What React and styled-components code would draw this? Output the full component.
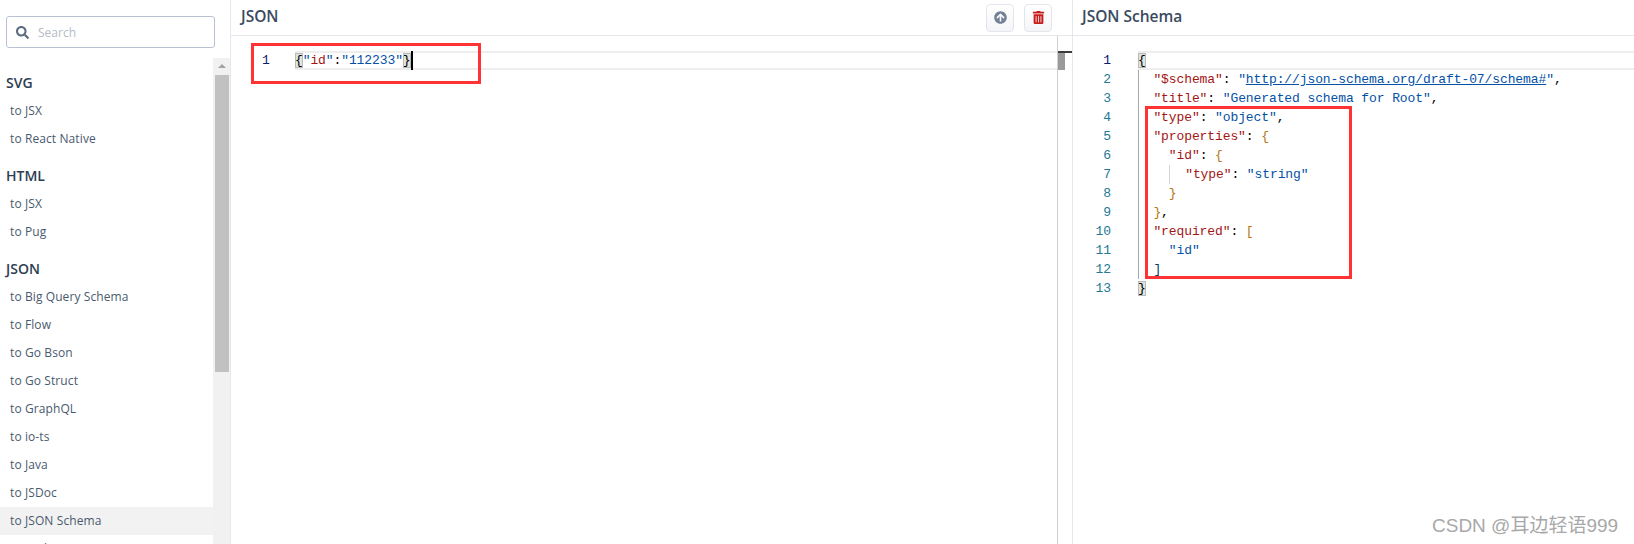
import React from 'react'
import styled, { createGlobalStyle } from 'styled-components'
import { FaArrowCircleUp, FaTrashAlt, FaSearch } from 'react-icons/fa'

const GlobalStyle = createGlobalStyle`
  html, body {
    margin: 0;
    height: 544px;
    overflow: hidden;
    background: #fff;
    font-family: "Open Sans", "Noto Sans", sans-serif;
  }
`

const groups = [
  { title: 'SVG', items: ['to JSX', 'to React Native'] },
  { title: 'HTML', items: ['to JSX', 'to Pug'] },
  {
    title: 'JSON',
    items: ['to Big Query Schema', 'to Flow', 'to Go Bson', 'to Go Struct', 'to GraphQL', 'to io-ts', 'to Java', 'to JSDoc', 'to JSON Schema', 'to Kotlin'],
  },
]

const schemaLines = [
  [['b', '{']],
  [['s', '  '], ['k', '"$schema"'], ['p', ': '], ['v', '"'], ['l', 'http://json-schema.org/draft-07/schema#'], ['v', '"'], ['p', ',']],
  [['s', '  '], ['k', '"title"'], ['p', ': '], ['v', '"Generated schema for Root"'], ['p', ',']],
  [['s', '  '], ['k', '"type"'], ['p', ': '], ['v', '"object"'], ['p', ',']],
  [['s', '  '], ['k', '"properties"'], ['p', ': '], ['o', '{']],
  [['s', '    '], ['k', '"id"'], ['p', ': '], ['o', '{']],
  [['s', '    '], ['g', ''], ['s', '  '], ['k', '"type"'], ['p', ': '], ['v', '"string"']],
  [['s', '    '], ['o', '}']],
  [['s', '  '], ['o', '}'], ['p', ',']],
  [['s', '  '], ['k', '"required"'], ['p', ': '], ['o', '[']],
  [['s', '    '], ['v', '"id"']],
  [['s', '  '], ['d', ']']],
  [['b', '}']],
]

function renderToken([type, text], key) {
  switch (type) {
    case 'k': return <Key key={key}>{text}</Key>
    case 'v': return <Str key={key}>{text}</Str>
    case 'l': return <UrlLink key={key}>{text}</UrlLink>
    case 'o': return <Bracket key={key}>{text}</Bracket>
    case 'd': return <DarkBracket key={key}>{text}</DarkBracket>
    case 'b': return <MatchBracket key={key}>{text}</MatchBracket>
    case 'g': return <IndentGuide key={key} />
    default: return <span key={key}>{text}</span>
  }
}

export default function App() {
  return (
    <Page>
      <GlobalStyle />
      <Sidebar>
        <SearchWrap>
          <SearchBox>
            <FaSearch size={13} color="#5a6b80" />
            <SearchText>Search</SearchText>
          </SearchBox>
        </SearchWrap>
        <NavArea>
          <NavList>
            {groups.map((g) => (
              <NavGroup key={g.title}>
                <GroupTitle>{g.title}</GroupTitle>
                {g.items.map((it) => (
                  <NavItem key={it} $active={it === 'to JSON Schema'}>{it}</NavItem>
                ))}
              </NavGroup>
            ))}
          </NavList>
          <ScrollTrack>
            <ScrollArrow />
            <ScrollThumb />
          </ScrollTrack>
        </NavArea>
      </Sidebar>

      <Panel $wide>
        <PanelHeader $inset={10}>
          <PanelTitle>JSON</PanelTitle>
          <Actions>
            <IconButton><FaArrowCircleUp size={13} color="#718096" /></IconButton>
            <IconButton><FaTrashAlt size={13} color="#c81e1e" /></IconButton>
          </Actions>
        </PanelHeader>
        <EditorRow>
          <Editor>
            <CodeLine>
              <LeftGutter>1</LeftGutter>
              <ActiveCode>
                <MatchBracket>{'{'}</MatchBracket>
                <Str>"</Str><Key>id</Key><Str>"</Str>:<Str>"112233"</Str>
                <MatchBracket>{'}'}</MatchBracket>
                <Cursor />
              </ActiveCode>
            </CodeLine>
            <LeftMark />
          </Editor>
          <Overview>
            <OverviewCap />
            <OverviewThumb />
          </Overview>
        </EditorRow>
      </Panel>

      <Panel>
        <PanelHeader $inset={9}>
          <PanelTitle>JSON Schema</PanelTitle>
        </PanelHeader>
        <SchemaEditor>
          {schemaLines.map((tokens, i) => {
            const first = i === 0
            const last = i === schemaLines.length - 1
            return (
              <CodeLine key={i}>
                <RightGutter $current={first}>{i + 1}</RightGutter>
                {first ? (
                  <ActiveCode>{tokens.map(renderToken)}</ActiveCode>
                ) : (
                  <GuidedCode $guide={!last}>{tokens.map(renderToken)}</GuidedCode>
                )}
              </CodeLine>
            )
          })}
          <RightMark />
        </SchemaEditor>
      </Panel>

      <Watermark>CSDN @耳边轻语999</Watermark>
    </Page>
  )
}

const Page = styled.div`
  display: flex;
  height: 544px;
  overflow: hidden;
  position: relative;
`

const Sidebar = styled.aside`
  width: 230px;
  flex: none;
  display: flex;
  flex-direction: column;
  border-right: 1px solid #e4e7ec;
  background: #fff;
`

const SearchWrap = styled.div`
  height: 58px;
  flex: none;
  padding: 16px 15px 0 6px;
  box-sizing: border-box;
`

const SearchBox = styled.div`
  height: 32px;
  box-sizing: border-box;
  border: 1px solid #b9c2d0;
  border-radius: 3px;
  display: flex;
  align-items: center;
  padding-left: 9px;
  gap: 9px;
`

const SearchText = styled.span`
  font-size: 12px;
  color: #b4bcc6;
`

const NavArea = styled.div`
  flex: 1;
  display: flex;
  min-height: 0;
`

const NavList = styled.nav`
  flex: 1;
  overflow: hidden;
  padding-top: 14px;
`

const NavGroup = styled.div`
  margin-bottom: 12px;
`

const GroupTitle = styled.div`
  height: 25px;
  line-height: 22px;
  padding-left: 6px;
  font-size: 14px;
  font-weight: 600;
  color: #2d3d52;
`

const NavItem = styled.div`
  height: 28px;
  line-height: 28px;
  padding-left: 10px;
  font-size: 12px;
  letter-spacing: 0.1px;
  color: #4a5a6e;
  background: ${(p) => (p.$active ? '#f2f2f2' : 'transparent')};
`

const ScrollTrack = styled.div`
  width: 17px;
  flex: none;
  background: #f1f1f1;
  display: flex;
  flex-direction: column;
  align-items: center;
`

const ScrollArrow = styled.div`
  margin: 6px 0 7px;
  width: 0;
  height: 0;
  border-left: 4px solid transparent;
  border-right: 4px solid transparent;
  border-bottom: 4px solid #a3a3a3;
`

const ScrollThumb = styled.div`
  width: 14px;
  height: 297px;
  background: #c1c1c1;
`

const Panel = styled.section`
  ${(p) => (p.$wide ? 'width: 841px; flex: none; border-right: 1px solid #e4e7ec;' : 'flex: 1;')}
  display: flex;
  flex-direction: column;
  min-width: 0;
  position: relative;
`

const PanelHeader = styled.header`
  height: 36px;
  flex: none;
  box-sizing: border-box;
  border-bottom: 1px solid #e4e7ec;
  display: flex;
  align-items: center;
  justify-content: space-between;
  padding: 0 20px 3px ${(p) => p.$inset}px;
`

const PanelTitle = styled.h2`
  margin: 0;
  font-size: 15.5px;
  font-weight: 600;
  color: #3a4a60;
`

const Actions = styled.div`
  display: flex;
  gap: 10px;
  margin-top: 3px;
`

const IconButton = styled.button`
  width: 28px;
  height: 28px;
  padding: 0;
  display: flex;
  align-items: center;
  justify-content: center;
  border: 1px solid #e2e6ec;
  border-radius: 4px;
  background: linear-gradient(#fff, #f4f5f7);
`

const EditorRow = styled.div`
  flex: 1;
  display: flex;
  min-height: 0;
`

const Editor = styled.div`
  flex: 1;
  padding-top: 15px;
  border-right: 1px solid #cfcfcf;
`

const SchemaEditor = styled.div`
  flex: 1;
  padding-top: 15px;
`

const CodeLine = styled.div`
  display: flex;
  height: 19px;
  line-height: 19px;
  font-family: "Liberation Mono", "DejaVu Sans Mono", monospace;
  font-size: 13px;
  letter-spacing: -0.1px;
  white-space: pre;
  color: #000;
`

const LeftGutter = styled.div`
  width: 64px;
  flex: none;
  padding-left: 31px;
  box-sizing: border-box;
  color: #0b216f;
`

const RightGutter = styled.div`
  width: 38px;
  margin-right: 27px;
  flex: none;
  text-align: right;
  color: ${(p) => (p.$current ? '#0b216f' : '#237893')};
`

const ActiveCode = styled.div`
  flex: 1;
  box-sizing: border-box;
  border-top: 2px solid #eeeeee;
  border-bottom: 2px solid #eeeeee;
  line-height: 15px;
`

const GuidedCode = styled.div`
  flex: 1;
  box-shadow: ${(p) => (p.$guide ? 'inset 1px 0 0 #a8a8a8' : 'none')};
`

const Key = styled.span`
  color: #a31515;
`

const Str = styled.span`
  color: #0451a5;
`

const UrlLink = styled.span`
  color: #0451a5;
  text-decoration: underline;
`

const Bracket = styled.span`
  color: #b5750f;
`

const DarkBracket = styled.span`
  color: #0b3a66;
`

const MatchBracket = styled.span`
  background: #dfe5dc;
  outline: 1px solid #b9b9b9;
  outline-offset: -1px;
`

const Cursor = styled.span`
  display: inline-block;
  width: 2px;
  height: 19px;
  margin-top: -2px;
  vertical-align: top;
  background: #000;
`

const IndentGuide = styled.span`
  display: inline-block;
  width: 0;
  height: 19px;
  vertical-align: top;
  border-left: 1px solid #d3d3d3;
`

const Overview = styled.div`
  width: 14px;
  flex: none;
  padding-top: 15px;
`

const OverviewCap = styled.div`
  height: 2px;
  background: #3c3c3c;
`

const OverviewThumb = styled.div`
  width: 7px;
  height: 17px;
  background: #9a9a9a;
`

const LeftMark = styled.div`
  position: absolute;
  left: 20px;
  top: 43px;
  width: 224px;
  height: 35px;
  border: 3px solid #ff3333;
`

const RightMark = styled.div`
  position: absolute;
  left: 72px;
  top: 106px;
  width: 201px;
  height: 167px;
  border: 3px solid #ff3333;
`

const Watermark = styled.div`
  position: absolute;
  left: 1432px;
  top: 510px;
  font-family: "Liberation Sans", "Noto Sans CJK SC", sans-serif;
  font-size: 19px;
  color: #a8a8a8;
  white-space: nowrap;
`
